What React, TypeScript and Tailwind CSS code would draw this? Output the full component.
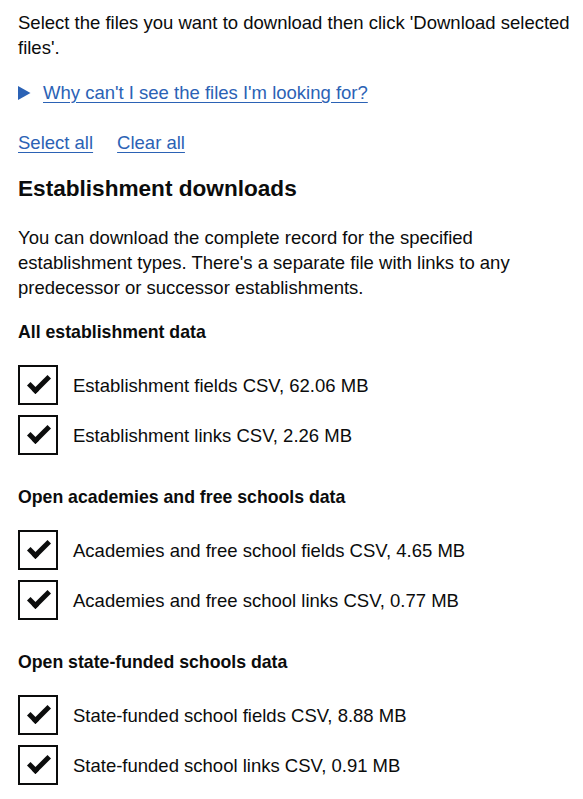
const groups = [
  {
    title: "All establishment data",
    files: ["Establishment fields CSV, 62.06 MB", "Establishment links CSV, 2.26 MB"],
  },
  {
    title: "Open academies and free schools data",
    files: [
      "Academies and free school fields CSV, 4.65 MB",
      "Academies and free school links CSV, 0.77 MB",
    ],
  },
  {
    title: "Open state-funded schools data",
    files: [
      "State-funded school fields CSV, 8.88 MB",
      "State-funded school links CSV, 0.91 MB",
    ],
  },
];

function Checkbox({ label }: { label: string }) {
  return (
    <label className="flex items-center">
      <span className="relative w-10 h-10 border-2 border-[#0b0c0c] bg-white shrink-0">
        <span className="absolute left-[8px] top-[9px] w-[22px] h-[12px] border-l-[5px] border-b-[5px] border-[#0b0c0c] -rotate-45" />
      </span>
      <span className="pl-[15px]">{label}</span>
    </label>
  );
}

export default function App() {
  return (
    <div
      className="bg-white text-[#0b0c0c] text-[18.5px] leading-[25px] pl-[18px] pr-[12px] pt-[10px] pb-[14px]"
      style={{ fontFamily: '"Liberation Sans", Arial, sans-serif' }}
    >
      <p className="mb-[20px]">
        Select the files you want to download then click 'Download selected files'.
      </p>

      <div className="flex items-center mb-[25px]">
        <svg width="13" height="14" viewBox="0 0 13 14" className="mr-[12px]">
          <path d="M0 0 L12.5 7 L0 14 Z" fill="#2b62b5" />
        </svg>
        <a href="#" className="text-[#2b62b5] underline underline-offset-[3px]">
          Why can't I see the files I'm looking for?
        </a>
      </div>

      <div className="flex gap-[24px] mb-[19px]">
        <a href="#" className="text-[#2b62b5] underline underline-offset-[3px]">
          Select all
        </a>
        <a href="#" className="text-[#2b62b5] underline underline-offset-[3px]">
          Clear all
        </a>
      </div>

      <h2 className="text-[22.6px] leading-[30px] font-bold mb-[21px]">Establishment downloads</h2>

      <p className="mb-[20px]">
        You can download the complete record for the specified establishment types. There's a
        separate file with links to any predecessor or successor establishments.
      </p>

      <div className="flex flex-col gap-[30px]">
        {groups.map((g) => (
          <fieldset key={g.title}>
            <legend className="text-[17.7px] leading-[25px] font-bold mb-[20px]">{g.title}</legend>
            <div className="flex flex-col gap-[10px]">
              {g.files.map((f) => (
                <Checkbox key={f} label={f} />
              ))}
            </div>
          </fieldset>
        ))}
      </div>
    </div>
  );
}
